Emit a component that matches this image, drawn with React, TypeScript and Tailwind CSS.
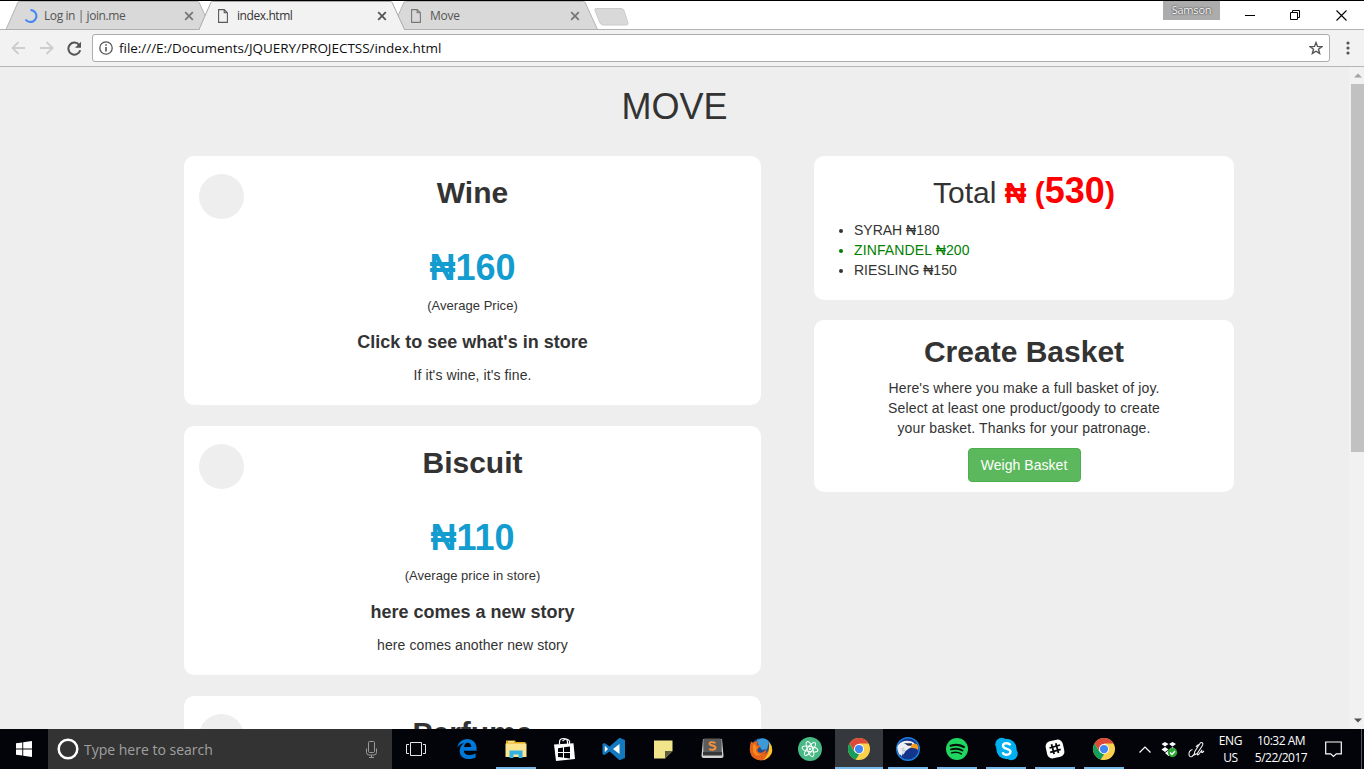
import type { ReactNode } from "react";

/* ---------- Browser chrome ---------- */

const PageIcon = ({ color = "#5a5a5a" }: { color?: string }) => (
  <svg width="10" height="14" viewBox="0 0 10 14" fill="none" stroke={color} strokeWidth="1.1">
    <path d="M.6.6h5.6l3.2 3.2v9.6H.6zM6.2.6v3.2h3.2" />
  </svg>
);

const Spinner = () => (
  <svg className="-ml-px" width="14" height="14" viewBox="0 0 14 14" fill="none" stroke="#4285f4" strokeWidth="2">
    <path d="M6.500 1a6 6 0 1 1-5 9.500" />
  </svg>
);

type TabProps = { icon: ReactNode; title: string; titleClass: string; active?: boolean };

function Tab({ icon, title, titleClass, active }: TabProps) {
  return (
    <div className={active ? "relative z-10 -ml-[13px] h-[29px] w-[206px]" : "relative -ml-[13px] h-[29px] w-[206px]"}>
      <svg className="absolute inset-0" width="206" height="29" viewBox="0 0 206 29">
        <path
          d="M0 28.5L12 1.2Q12.500 .5 13.500 .5H191.500Q192.500 .5 193 1.200L205.500 28.500"
          fill={active ? "#f2f2f2" : "#d9d9d9"}
          stroke={active ? "#a8a8a8" : "#b3b3b3"}
        />
        {active ? <path d="M1 28.5H205" stroke="#f2f2f2" /> : <path d="M0 28.5H206" stroke="#b0b0b0" />}
      </svg>
      <div className="relative flex h-full items-center pl-[19px] pr-[18px]">
        <span className="flex w-[19px] items-center">{icon}</span>
        <span className={titleClass}>{title}</span>
        <svg className="ml-auto" width="10" height="10" viewBox="0 0 10 10" stroke={active ? "#555" : "#777"} strokeWidth="1.8">
          <path d="M1.200 1.200l7.600 7.600M8.800 1.200L1.200 8.800" />
        </svg>
      </div>
    </div>
  );
}

function TitleBar() {
  return (
    <header className="flex h-[30px] border-t border-black bg-[linear-gradient(to_top,#b3b3b3_1px,#fff_1px)]">
      <div className="flex pl-[19px]">
        <Tab icon={<Spinner />} title="Log in | join.me" titleClass="text-[12px] tracking-[-0.42px] text-[#555]" />
        <Tab icon={<PageIcon />} title="index.html" titleClass="text-[12px] tracking-[-0.42px] text-[#333]" active />
        <Tab icon={<PageIcon color="#777" />} title="Move" titleClass="text-[12px] tracking-[-0.28px] text-[#555]" />
        <svg className="-ml-[4px] mt-[7px]" width="36" height="18" viewBox="0 0 36 18">
          <path d="M2 .5h25q2 0 2.800 1.500L34 15q.3 2-1.500 2H9q-2 0-3-2L.8 2Q.5.5 2 .5z" fill="#d9d9d9" stroke="#cacaca" />
        </svg>
      </div>
      <div className="ml-auto flex">
        <div className="h-[19px] w-[57px] bg-[#acacac] text-center text-[11px] leading-[18px] tracking-[-0.2px] text-white [text-shadow:0_0_2px_#333,0_0_1px_#444]">
          Samson
        </div>
        <div className="flex h-7 items-center">
          <svg className="ml-[25px]" width="10" height="10" viewBox="0 0 10 10" stroke="#000"><path d="M0 5.500h10" /></svg>
          <svg className="ml-[35px]" width="10" height="10" viewBox="0 0 10 10" fill="none" stroke="#000">
            <path d="M.5 2.500h7v7h-7zM2.500 2.500v-2h7v7h-2" />
          </svg>
          <svg className="ml-[36px] mr-[17px]" width="11" height="11" viewBox="0 0 11 11" stroke="#000" strokeWidth="1.100"><path d="M.5.500l10 10M10.500.500l-10 10" /></svg>
        </div>
      </div>
    </header>
  );
}

function Toolbar() {
  return (
    <div className="flex h-[37px] items-center border-b border-[#b5b5b5] bg-[#f2f2f2]">
      <svg className="ml-[11px]" width="15" height="14" viewBox="0 0 15 14" fill="none" stroke="#cdcdcd" strokeWidth="1.800">
        <path d="M14 7H1.500M7.500 1L1.500 7l6 6" />
      </svg>
      <svg className="ml-[13px]" width="15" height="14" viewBox="0 0 15 14" fill="none" stroke="#cdcdcd" strokeWidth="1.800">
        <path d="M1 7h12.500M7.500 1l6 6-6 6" />
      </svg>
      <svg className="ml-[13px]" width="15" height="15" viewBox="0 0 15 15">
        <path d="M12.200 4A6 6 0 1 0 13.200 9.200" fill="none" stroke="#555" strokeWidth="2" />
        <path d="M14 .8v6H8z" fill="#555" />
      </svg>
      <div className="ml-[10px] flex h-7 w-[1238px] items-center rounded-[3px] border border-[#acacac] bg-white pl-[6px] pr-[6px]">
        <svg width="14" height="14" viewBox="0 0 14 14" fill="none" stroke="#555" strokeWidth="1.300">
          <circle cx="7" cy="7" r="6.200" />
          <path d="M7 6v4.500M7 3.300v1.500" strokeWidth="1.600" />
        </svg>
        <span className="ml-[6px] text-[13.5px] tracking-[-0.030px] text-[#111]">file:///E:/Documents/JQUERY/PROJECTSS/index.html</span>
        <svg className="ml-auto" width="14" height="14" viewBox="0 0 14 14" fill="none" stroke="#555" strokeWidth="1.400">
          <path d="M7 1.600l1.500 3.800 4.300.300-3.300 2.600 1.100 4.100L7 10.200l-3.600 2.200 1.100-4.100L1.200 5.700l4.300-.3z" />
        </svg>
      </div>
      <svg className="ml-4" width="4" height="14" viewBox="0 0 4 14" fill="#555">
        <circle cx="2" cy="2" r="1.600" /><circle cx="2" cy="7" r="1.600" /><circle cx="2" cy="12" r="1.600" />
      </svg>
    </div>
  );
}

/* ---------- Page ---------- */

type Product = { name: string; price?: string; note?: string; heading?: string; text?: string };

const products: Product[] = [
  { name: "Wine", price: "₦160", note: "(Average Price)", heading: "Click to see what's in store", text: "If it's wine, it's fine." },
  { name: "Biscuit", price: "₦110", note: "(Average price in store)", heading: "here comes a new story", text: "here comes another new story" },
  { name: "Perfume" },
];

function ProductCard({ name, price, note, heading, text }: Product) {
  return (
    <section className="relative h-[249px] shrink-0 rounded-[10px] bg-white pt-5 text-center">
      <div className="absolute left-[15px] top-[18px] size-[45px] rounded-full bg-[#eee]" />
      <h2 className="text-[30px] font-bold leading-[33px]">{name}</h2>
      <div className="mt-[39px] text-[36px] font-bold leading-10 text-[#129ccf]">{price}</div>
      <div className="mt-[8px] text-[13px] leading-5 tracking-[0.03px]">{note}</div>
      <h4 className="mt-4 text-[18px] font-bold leading-5">{heading}</h4>
      <p className="mt-[13px] text-[14px] leading-5 tracking-[0.09px]">{text}</p>
    </section>
  );
}

function Page() {
  return (
    <main className="flex h-[662px] overflow-hidden bg-[#eee] font-['Liberation_Sans',Arial,sans-serif] text-[#333]">
      <div className="flex-1">
        <h1 className="mt-5 text-center text-[36px] leading-10">MOVE</h1>
        <div className="mt-[29px] flex items-start pl-[184px]">
          <div className="flex w-[577px] flex-col gap-[21px]">
            {products.map((p) => <ProductCard key={p.name} {...p} />)}
          </div>
          <div className="ml-[53px] flex w-[420px] flex-col gap-5">
            <section className="h-[144px] rounded-[10px] bg-white pt-[15px]">
              <h2 className="h-[49px] text-center text-[30px] leading-[39px]">
                Total <b className="text-[#f00]">₦ (<span className="text-[36px]">530</span>)</b>
              </h2>
              <ul className="list-disc pl-10 text-[14px] leading-5">
                <li>SYRAH ₦180</li>
                <li className="tracking-[0.13px] text-[#008000]">ZINFANDEL ₦200</li>
                <li>RIESLING ₦150</li>
              </ul>
            </section>
            <section className="flex h-[172px] flex-col items-center rounded-[10px] bg-white pt-[15px] text-center">
              <h2 className="text-[30px] font-bold leading-[33px]">Create Basket</h2>
              <p className="mt-[10px] w-[280px] text-[14px] leading-5 tracking-[0.13px]">
                Here's where you make a full basket of joy. Select at least one product/goody to create your basket. Thanks for your patronage.
              </p>
              <button className="mt-[10px] h-[34px] w-[113px] rounded-[4px] border border-[#4cae4c] bg-[#5cb85c] text-[14px] tracking-[0.05px] text-white">
                Weigh Basket
              </button>
            </section>
          </div>
        </div>
      </div>
      <div className="flex w-[15px] flex-col items-center bg-[#f1f1f1] pl-[2px]">
        <svg className="mt-[6px]" width="8" height="5" viewBox="0 0 8 5" fill="#a3a3a3"><path d="M4 .5l4 4H0z" /></svg>
        <div className="mt-[6px] h-[368px] w-[13px] bg-[#c1c1c1]" />
        <svg className="mb-[6px] mt-auto" width="8" height="5" viewBox="0 0 8 5" fill="#505050"><path d="M4 4.500l4-4H0z" /></svg>
      </div>
    </main>
  );
}

/* ---------- Taskbar ---------- */

const Edge = () => (
  <svg width="22" height="22" viewBox="0 0 24 24" fill="#0078d7">
    <path d="M1.500 10.600C2.200 5 6.500 1 12.200 1 18.800 1 22.500 5.700 22.500 11.600v2.200H8.600c.1 3.700 3.600 4.900 6.900 4.800 2-.1 4-.7 5.900-1.900v4.700c-2.300 1.200-4.900 1.700-7.500 1.600-5.500 0-9.900-3.400-9.900-8.900 0-3.700 1.800-6.700 5-8.300C5 6.300 3 8.200 1.500 10.600zM8.800 9.700h7.800c0-2.800-1.300-4.600-4-4.600-2.100 0-3.500 1.800-3.800 4.600z" />
  </svg>
);

const Explorer = () => (
  <svg width="22" height="20" viewBox="0 0 22 20">
    <path d="M1 1.500h9l1 1.500h9.500v3H1z" fill="#e5a91f" />
    <path d="M3 2.200h6v1.300H3z" fill="#fff2b3" />
    <path d="M.5 4.500h21V18H.5z" fill="#fde48f" />
    <path d="M4.500 19v-7.500h13V19h-4v-3.500h-5V19z" fill="#35b0e5" />
  </svg>
);

const Store = () => (
  <svg width="22" height="24" viewBox="0 0 22 24">
    <path d="M5.500 7V5q0-3.500 4-3.500T13.500 5v2M8.500 4q4-4 7 0v3" fill="none" stroke="#fff" strokeWidth="1.200" />
    <path d="M0 7.500l19.500-1.200L21 22 2 24z" fill="#fff" />
    <path d="M4 11.200l5-.7v4.600H4zM10 10.300l6-.8v5.600h-6zM4 16h5v4.500l-5-.6zM10 16h6v5.500l-6-.8z" fill="#020409" />
  </svg>
);

const VsCode = () => (
  <svg width="24" height="24" viewBox="0 0 24 24">
    <path d="M17.500.8L23 3v18l-5.500 2.200L7.600 14.500 2.500 18 .5 17V7l2-1 5.100 3.500z" fill="#1478be" />
    <path d="M17.500 7v10l-6.500-5zM2.800 8.700v6.600L6 12z" fill="#fff" />
  </svg>
);

const StickyNotes = () => (
  <svg width="19" height="19" viewBox="0 0 19 19">
    <path d="M0 .5h18.500V11L11 18.500H0z" fill="#f2e48b" /><path d="M11 18.500V11h7.500z" fill="#615c3f" />
  </svg>
);

const Sublime = () => (
  <svg className="-mt-[2px]" width="23" height="21" viewBox="0 0 23 21">
    <path d="M2 1l-1.500 17q0 2 2 2h18q2 0 2-2L21 1z" fill="#d2d2d2" />
    <rect x="2.300" y=".5" width="18.400" height="16" rx="1.500" fill="#5c5c5c" />
    <path d="M2 14h19v3.500H2z" fill="#373737" />
    <path d="M14.500 4.800Q8.500 3 8.500 5.800c0 2.200 6 1.200 6 3.800 0 2.800-4.500 2.300-6.300 1.500" fill="none" stroke="#f69340" strokeWidth="1.900" />
  </svg>
);

const Firefox = () => (
  <svg width="24" height="24" viewBox="0 0 24 24">
    <circle cx="12.500" cy="11.500" r="10.500" fill="#1d4f94" />
    <path d="M8 3q8-4 12 2l-2 7-5 1-4-6z" fill="#3b9bd8" />
    <path d="M2 4.500q1 .2 2 1.300Q7 3 9.500 5q-2 1-1 3l3.500 1-3 2.500q-2 3 2 4.200 4 0 6.500-4 0 4-2 5.500Q21 15 20 6q5 5 2.500 11Q18.500 23.500 12 23.500 3 23 1 15q-.8-5 1-10.500z" fill="#e4621a" />
    <path d="M20 5q4.500 5 2.500 11-3 6-9 7 8-5 6.500-18z" fill="#ffc629" />
    <path d="M4 8q3-2 3 2l2 .5-2 2q0 5 6 5-7 3-9-3z" fill="#f98a1c" />
  </svg>
);

const Atom = () => (
  <svg width="24" height="24" viewBox="0 0 24 24" fill="none" stroke="#fff" strokeWidth="1">
    <circle cx="12" cy="12" r="12" fill="#48b985" stroke="none" />
    <ellipse cx="12" cy="12" rx="8" ry="2.600" transform="rotate(10 12 12)" />
    <ellipse cx="12" cy="12" rx="8" ry="2.600" transform="rotate(70 12 12)" />
    <ellipse cx="12" cy="12" rx="8" ry="2.600" transform="rotate(130 12 12)" />
    <circle cx="12" cy="12" r=".8" fill="#fff" />
  </svg>
);

const Chrome = () => (
  <svg width="22" height="22" viewBox="0 0 24 24">
    <circle cx="12" cy="12" r="12" fill="#fbd04b" />
    <path d="M12 12L7.200 14.800 1.600 6A12 12 0 0 1 22.400 6H12z" fill="#db4a3a" />
    <path d="M1.600 6L7 15l5 3-3.300 5.500A12 12 0 0 1 1.600 6z" fill="#149e5d" />
    <path d="M16.800 14.800L11 24q-1.200-.1-2.400-.5L13.500 17z" fill="#fbd04b" />
    <circle cx="12" cy="12" r="5.500" fill="#fff" /><circle cx="12" cy="12" r="4.500" fill="#4286f5" />
  </svg>
);

const Eagle = () => (
  <svg width="24" height="24" viewBox="0 0 24 24">
    <circle cx="12" cy="12" r="11.300" fill="#14358c" stroke="#1a80e4" strokeWidth="1.400" />
    <path d="M1.500 9Q4 5 8.500 4 14 3 18.500 6L16 10l-3 1.500q-4 2-5.500 6l-1-1-.5 3-1.500-2-.5 1Q.5 13 1.500 9z" fill="#eceef1" />
    <path d="M5 12l3-1-2 3 3-1-3 4" fill="none" stroke="#b9c2d2" strokeWidth=".8" />
    <path d="M8 6q4 .5 8 .2v2q-4 1.500-5.500-.4z" fill="#1d2c50" />
    <path d="M15 8q5-3.500 7 .8.700 2-.2 4.200Q20 10.500 15 11z" fill="#f59b19" />
  </svg>
);

const Spotify = () => (
  <svg width="22" height="22" viewBox="0 0 24 24" fill="none" stroke="#071109" strokeLinecap="round">
    <circle cx="12" cy="12" r="12" fill="#1fd760" stroke="none" />
    <path d="M5 8.500q8-2.300 14.500 1.300" strokeWidth="2.400" /><path d="M5.500 12.500q7-2 12.500 1.200" strokeWidth="2" /><path d="M6 16.200q6-1.600 10.800 1.100" strokeWidth="1.600" />
  </svg>
);

const Skype = () => (
  <svg width="23" height="24" viewBox="0 0 24 24">
    <circle cx="7" cy="7" r="6.700" fill="#00aff0" /><circle cx="17" cy="17" r="6.700" fill="#00aff0" /><circle cx="12" cy="12" r="10.600" fill="#00aff0" />
    <path d="M16 8.200Q15 6 11.900 6 8.300 6 8.300 8.700c0 4 7.900 2.200 7.900 6.200 0 3-4 3.400-5.400 3Q8.500 17.500 8 15.300" fill="none" stroke="#fff" strokeWidth="2.500" />
  </svg>
);

const Slack = () => (
  <svg width="20" height="20" viewBox="0 0 20 20">
    <rect x="2" y="2" width="16" height="16" rx="4.500" fill="#fff" stroke="#fff" strokeWidth="1.500" transform="rotate(-12 10 10)" />
    <path d="M6.500 5.300l2.700 9.700M10.800 4.300l2.700 9.700M4.500 9l10.500-3M5.200 13.300l10.500-3" stroke="#08090d" strokeWidth="1.800" />
  </svg>
);

const apps: { name: string; icon: ReactNode; state: "idle" | "open" | "active" }[] = [
  { name: "edge", icon: <Edge />, state: "idle" },
  { name: "explorer", icon: <Explorer />, state: "open" },
  { name: "store", icon: <Store />, state: "idle" },
  { name: "code", icon: <VsCode />, state: "idle" },
  { name: "notes", icon: <StickyNotes />, state: "idle" },
  { name: "sublime", icon: <Sublime />, state: "idle" },
  { name: "firefox", icon: <Firefox />, state: "idle" },
  { name: "atom", icon: <Atom />, state: "idle" },
  { name: "chrome", icon: <Chrome />, state: "active" },
  { name: "eagle", icon: <Eagle />, state: "open" },
  { name: "spotify", icon: <Spotify />, state: "open" },
  { name: "skype", icon: <Skype />, state: "open" },
  { name: "slack", icon: <Slack />, state: "open" },
  { name: "chrome-2", icon: <Chrome />, state: "open" },
];

const stateClass = {
  idle: "relative flex w-12 items-center justify-center",
  open: "relative flex w-12 items-center justify-center after:absolute after:inset-x-1 after:bottom-0 after:h-[2px] after:bg-[#76b9ed]",
  active: "relative flex w-12 items-center justify-center bg-[#35383d] after:absolute after:inset-x-0 after:bottom-0 after:h-[2px] after:bg-[#76b9ed]",
};

function Taskbar() {
  return (
    <footer className="flex h-10 bg-[#020409] text-white">
      <div className="flex w-12 items-center justify-center">
        <svg width="16" height="16" viewBox="0 0 16 16" fill="#fff">
          <path d="M0 2.300L6.300 1.400v6.100H0zM7.200 1.300L16 0v7.500H7.200zM0 8.500h6.300v6.100L0 13.700zM7.200 8.500H16V16l-8.800-1.300z" />
        </svg>
      </div>
      <div className="flex w-[344px] items-center bg-[#333] pl-[9px] pr-[14px]">
        <svg width="22" height="22" viewBox="0 0 22 22" fill="none" stroke="#fff" strokeWidth="2.500"><circle cx="11" cy="11" r="9.300" /></svg>
        <span className="ml-[5px] pt-[2px] text-[14px] leading-5 text-[#a0a0a0]">Type here to search</span>
        <svg className="ml-auto" width="13" height="17" viewBox="0 0 13 17" fill="none" stroke="#999">
          <rect x="3.500" y=".5" width="6" height="11" rx="1" /><path d="M1.500 7.500v4q0 2.500 2.500 2.500h5q2.500 0 2.500-2.500v-4M6.500 14v2.500M4 16.500h5" />
        </svg>
      </div>
      <div className="flex w-[51px] items-center pl-[14px]">
        <svg width="20" height="14" viewBox="0 0 20 14" fill="none" stroke="#e6e6e6">
          <path d="M4.500.500h11v13h-11zM3 2.500H.5v9H3M17 2.500h2.500v9H17" />
        </svg>
      </div>
      <nav className="flex gap-px">
        {apps.map((a) => <div key={a.name} className={stateClass[a.state]}>{a.icon}</div>)}
      </nav>
      <div className="ml-auto flex items-center">
        <svg width="12" height="7" viewBox="0 0 12 7" fill="none" stroke="#fff" strokeWidth="1.200"><path d="M.5 6.500L6 1l5.500 5.500" /></svg>
        <svg className="ml-[10px]" width="17" height="17" viewBox="0 0 17 17">
          <path d="M4 1l3.500 2L4 5.500.5 3zM11.500 1L15 3l-3.500 2.500L8 3zM4 6l3.500 2.500L4 11 .5 8.500zM11.500 6L15 8.500 11.500 11 8 8.500zM4 12l3.500-2.500L11 12l-3.500 3z" fill="#fff" />
          <circle cx="11.500" cy="11.500" r="4.700" fill="#2da735" /><path d="M9 11.500l2 2 3-3.500" fill="none" stroke="#fff" strokeWidth="1.300" />
        </svg>
        <svg className="ml-[10px]" width="17" height="17" viewBox="0 0 17 17" fill="none" stroke="#eee" strokeWidth="1.100">
          <path d="M4.500 8.500Q1 9.500 1 13t3 2.500L7 12.500M6 14l.8-3.500L12 2.500q1-1.500 2.200-.7t.4 2.500L9.200 12.500 6 14zM11.500 4q-2-.5-3.500 2M9.500 12.500q-.5 2 1 1l3.500-4.500q-1 3 .5 2.500l1.500-1.500" />
        </svg>
        <div className="ml-[13px] w-[25px] text-center text-[12px] leading-[17px] tracking-[-0.300px]">ENG<br />US</div>
        <div className="ml-[9px] w-[58px] whitespace-nowrap text-center text-[12px] leading-[17px] tracking-[-0.500px]">10:32 AM<br />5/22/2017</div>
        <svg className="ml-[15px]" width="17" height="17" viewBox="0 0 17 17" fill="none" stroke="#fff" strokeWidth="1.200">
          <path d="M.7 1h15.600v11.800h-5L8.500 15.500l-2.800-2.700h-5z" />
        </svg>
        <div className="ml-[19px] mr-[2px] h-10 w-px bg-[#55585d]" />
      </div>
    </footer>
  );
}

export default function App() {
  return (
    <div className="flex h-[769px] w-[1364px] flex-col overflow-hidden font-['Open_Sans','Noto_Sans',sans-serif]">
      <TitleBar />
      <Toolbar />
      <Page />
      <Taskbar />
    </div>
  );
}
